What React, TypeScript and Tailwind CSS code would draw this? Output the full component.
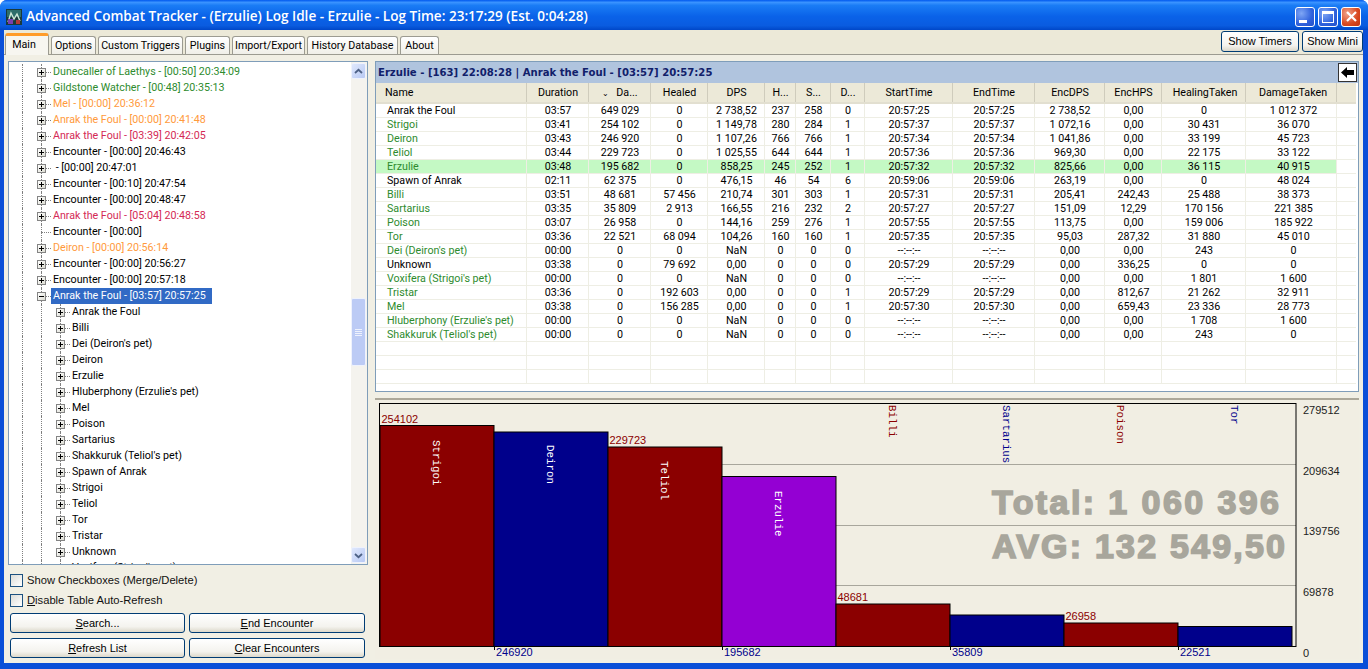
import React from "react";

const F = "font-['Liberation_Sans','DejaVu_Sans',sans-serif]";
const T = "font-['Roboto','Liberation_Sans',sans-serif] text-[10.7px]";
const G = "text-[#2e8b2e]";
const O = "text-[#ff9a3c]";
const R = "text-[#d42a55]";
const K = "text-black";

const encounters: [string, string, boolean?][] = [
  ["Dunecaller of Laethys - [00:50] 20:34:09", G],
  ["Gildstone Watcher - [00:48] 20:35:13", G],
  ["Mel - [00:00] 20:36:12", O],
  ["Anrak the Foul - [00:00] 20:41:48", O],
  ["Anrak the Foul - [03:39] 20:42:05", R],
  ["Encounter - [00:00] 20:46:43", K],
  [" - [00:00] 20:47:01", K],
  ["Encounter - [00:10] 20:47:54", K],
  ["Encounter - [00:00] 20:48:47", K],
  ["Anrak the Foul - [05:04] 20:48:58", R],
  ["Encounter - [00:00]", K, true],
  ["Deiron - [00:00] 20:56:14", O],
  ["Encounter - [00:00] 20:56:27", K],
  ["Encounter - [00:00] 20:57:18", K],
];

const children = [
  "Anrak the Foul", "Billi", "Dei (Deiron's pet)", "Deiron", "Erzulie", "Hluberphony (Erzulie's pet)", "Mel", "Poison",
  "Sartarius", "Shakkuruk (Teliol's pet)", "Spawn of Anrak", "Strigoi", "Teliol", "Tor", "Tristar", "Unknown", "Voxifera (Strigoi's pet)",
];

const cols = [
  ["Name", 150], ["Duration", 62], ["Da...", 62], ["Healed", 57], ["DPS", 57], ["H...", 31], ["S...", 35], ["D...", 34],
  ["StartTime", 88], ["EndTime", 82], ["EncDPS", 70], ["EncHPS", 57], ["HealingTaken", 84], ["DamageTaken", 91],
] as [string, number][];

const K1 = "";
const rows: [string, string, ...string[]][] = [
  ["Anrak the Foul", K1, "03:57", "649 029", "0", "2 738,52", "237", "258", "0", "20:57:25", "20:57:25", "2 738,52", "0,00", "0", "1 012 372"],
  ["Strigoi", G, "03:41", "254 102", "0", "1 149,78", "280", "284", "1", "20:57:37", "20:57:37", "1 072,16", "0,00", "30 431", "36 070"],
  ["Deiron", G, "03:43", "246 920", "0", "1 107,26", "766", "766", "1", "20:57:34", "20:57:34", "1 041,86", "0,00", "33 199", "45 723"],
  ["Teliol", G, "03:44", "229 723", "0", "1 025,55", "644", "644", "1", "20:57:36", "20:57:36", "969,30", "0,00", "22 175", "33 122"],
  ["Erzulie", G, "03:48", "195 682", "0", "858,25", "245", "252", "1", "20:57:32", "20:57:32", "825,66", "0,00", "36 115", "40 915"],
  ["Spawn of Anrak", K1, "02:11", "62 375", "0", "476,15", "46", "54", "6", "20:59:06", "20:59:06", "263,19", "0,00", "0", "48 024"],
  ["Billi", G, "03:51", "48 681", "57 456", "210,74", "301", "303", "1", "20:57:31", "20:57:31", "205,41", "242,43", "25 488", "38 373"],
  ["Sartarius", G, "03:35", "35 809", "2 913", "166,55", "216", "232", "2", "20:57:27", "20:57:27", "151,09", "12,29", "170 156", "221 385"],
  ["Poison", G, "03:07", "26 958", "0", "144,16", "259", "276", "1", "20:57:55", "20:57:55", "113,75", "0,00", "159 006", "185 922"],
  ["Tor", G, "03:36", "22 521", "68 094", "104,26", "160", "160", "1", "20:57:35", "20:57:35", "95,03", "287,32", "31 880", "45 010"],
  ["Dei (Deiron's pet)", G, "00:00", "0", "0", "NaN", "0", "0", "0", "--:--:--", "--:--:--", "0,00", "0,00", "243", "0"],
  ["Unknown", K1, "03:38", "0", "79 692", "0,00", "0", "0", "0", "20:57:29", "20:57:29", "0,00", "336,25", "0", "0"],
  ["Voxifera (Strigoi's pet)", G, "00:00", "0", "0", "NaN", "0", "0", "0", "--:--:--", "--:--:--", "0,00", "0,00", "1 801", "1 600"],
  ["Tristar", G, "03:36", "0", "192 603", "0,00", "0", "0", "1", "20:57:29", "20:57:29", "0,00", "812,67", "21 262", "32 911"],
  ["Mel", G, "03:38", "0", "156 285", "0,00", "0", "0", "1", "20:57:30", "20:57:30", "0,00", "659,43", "23 336", "28 773"],
  ["Hluberphony (Erzulie's pet)", G, "00:00", "0", "0", "NaN", "0", "0", "0", "--:--:--", "--:--:--", "0,00", "0,00", "1 708", "1 600"],
  ["Shakkuruk (Teliol's pet)", G, "00:00", "0", "0", "NaN", "0", "0", "0", "--:--:--", "--:--:--", "0,00", "0,00", "243", "0"],
];

function Expander({ open, none }: { open?: boolean; none?: boolean }) {
  return (
    <span className="relative block h-full w-[19px] shrink-0">
      <span className="absolute left-[9px] top-0 h-full border-l border-dotted border-[#808080]" />
      <span className="absolute left-[9px] right-0 top-[8px] border-t border-dotted border-[#808080]" />
      {!none && (
        <span className="absolute left-[5px] top-[4px] flex h-[9px] w-[9px] items-center justify-center border border-[#848484] bg-[linear-gradient(135deg,#fff,#dcdcd2)]">
          <span className="absolute h-px w-[5px] bg-black" />
          {!open && <span className="absolute h-[5px] w-px bg-black" />}
        </span>
      )}
    </span>
  );
}

function Guide({ w }: { w: string }) {
  return <span className={`block h-full shrink-0 border-r border-dotted border-[#808080] ${w}`} />;
}

function TreeRow({ text, color, none, open, selected }: { text: string; color: string; none?: boolean; open?: boolean; selected?: boolean }) {
  return (
    <div className="flex h-4 shrink-0 items-stretch">
      <Guide w="w-[14px]" />
      <span className="w-[9px] shrink-0" />
      <Expander open={open} none={none} />
      <span className={`flex items-center whitespace-pre pl-[2px] leading-4 ${selected ? "bg-[#316ac5] pr-[6px] text-white" : color}`}>{text}</span>
    </div>
  );
}

function ChildRow({ text }: { text: string }) {
  return (
    <div className="flex h-4 shrink-0 items-stretch">
      <Guide w="w-[14px]" />
      <Guide w="w-[19px]" />
      <span className="w-[9px] shrink-0" />
      <Expander />
      <span className="flex items-center whitespace-pre pl-[2px] leading-4 text-black">{text}</span>
    </div>
  );
}

function ScrollBtn({ up }: { up?: boolean }) {
  return (
    <div className="flex h-[16px] w-[15px] items-center justify-center rounded-[2px] border border-[#eef2fd] bg-[linear-gradient(135deg,#dfe8fd,#b8c9f3)]">
      <svg width="9" height="7" viewBox="0 0 9 7">
        <path d={up ? "M1 5 L4.5 1.8 L8 5" : "M1 2 L4.5 5.2 L8 2"} fill="none" stroke="#4d6185" strokeWidth="1.8" />
      </svg>
    </div>
  );
}

function XpButton({ children, className = "" }: { children: React.ReactNode; className?: string }) {
  return (
    <div className={`flex items-center justify-center rounded-[3px] border border-[#003c74] bg-[linear-gradient(#fff,#f4f3ee_70%,#dcd8ca)] text-black ${className}`}>
      {children}
    </div>
  );
}

function Check({ label }: { label: React.ReactNode }) {
  return (
    <div className="flex h-5 items-center gap-1">
      <span className="h-[13px] w-[13px] border border-[#1c5180] bg-[linear-gradient(135deg,#dcdcd7,#fff)]" />
      <span className="text-[11.2px] text-[#111]">{label}</span>
    </div>
  );
}

function Tab({ label, w }: { label: string; w: string }) {
  return (
    <div className={`flex h-[18px] items-center justify-center rounded-t-[3px] border border-b-0 border-[#9c9b91] bg-[linear-gradient(#fff,#f0efe8)] pt-[1px] text-black ${T} ${w}`}>
      {label}
    </div>
  );
}

function WinBtn({ kind }: { kind: "min" | "max" | "close" }) {
  const bg =
    kind === "close"
      ? "bg-[radial-gradient(circle_at_30%_30%,#f0a48c,#d9481f_60%,#c2330f)]"
      : "bg-[radial-gradient(circle_at_30%_30%,#7fa6f5,#2f61dc_60%,#2350c8)]";
  return (
    <div className={`flex h-[20px] w-[20px] items-center justify-center rounded-[3px] border border-white ${bg}`}>
      {kind === "min" && <span className="mt-[10px] mr-[5px] h-[3px] w-[8px] bg-white" />}
      {kind === "max" && <span className="h-[12px] w-[12px] border border-t-[3px] border-white" />}
      {kind === "close" && (
        <svg width="13" height="13" viewBox="0 0 13 13">
          <path d="M2 2 L11 11 M11 2 L2 11" stroke="#fff" strokeWidth="2.2" />
        </svg>
      )}
    </div>
  );
}

function AppIcon() {
  return (
    <svg width="16" height="16" viewBox="0 0 16 16" className="shrink-0">
      <rect width="16" height="16" fill="#1a3a3a" />
      <rect x="1" y="1" width="14" height="7" fill="#2e6e6a" />
      <path d="M2 13 L5 4 L8 10 L11 5 L14 12" stroke="#cfe8d8" strokeWidth="1.4" fill="none" />
      <rect x="2" y="10" width="5" height="5" fill="#7a3fb0" />
      <rect x="10" y="11" width="4" height="4" fill="#b23a3a" />
    </svg>
  );
}

function Chart() {
  const bars = [
    { x: 381, top: 425.5, c: "#8b0000", n: "Strigoi", nx: 437, ny: 440, v: "254102" },
    { x: 495, top: 432, c: "#00008b", n: "Deiron", nx: 551, ny: 445, v: "246920" },
    { x: 609, top: 447, c: "#8b0000", n: "Teliol", nx: 665, ny: 461, v: "229723" },
    { x: 723, top: 476.5, c: "#9400d3", n: "Erzulie", nx: 779, ny: 491, v: "195682" },
    { x: 837, top: 604, c: "#8b0000", n: "Billi", nx: 893, ny: 405, v: "48681" },
    { x: 951, top: 615, c: "#00008b", n: "Sartarius", nx: 1007, ny: 405, v: "35809" },
    { x: 1065, top: 623, c: "#8b0000", n: "Poison", nx: 1121, ny: 405, v: "26958" },
    { x: 1179, top: 626.5, c: "#00008b", n: "Tor", nx: 1235, ny: 405, v: "22521" },
  ];
  const OX = 376;
  const OY = 400;
  return (
    <svg width="983" height="259" viewBox={`${OX} ${OY} 983 259`} className="block">
      {[464, 525, 585].map((y) => (
        <line key={y} x1="381" x2="1297" y1={y + 0.5} y2={y + 0.5} stroke="#a8a69c" />
      ))}
      <text x="993" y="514" fontFamily="'Liberation Sans',sans-serif" fontWeight="700" fontSize="34" fill="#a8a69c" stroke="#a8a69c" strokeWidth="1.6" textLength="287">Total: 1 060 396</text>
      <text x="993" y="558" fontFamily="'Liberation Sans',sans-serif" fontWeight="700" fontSize="34" fill="#a8a69c" stroke="#a8a69c" strokeWidth="1.6" textLength="293">AVG: 132 549,50</text>
      {bars.map((b, i) => (
        <g key={b.n}>
          <rect x={b.x} y={b.top} width="114" height={646.5 - b.top} fill={b.c} stroke="#000" strokeWidth="1" />
          <text
            transform={`translate(${b.nx - 3.5} ${b.ny}) rotate(90)`}
            fontFamily="'Liberation Mono',monospace"
            fontSize="10.8"
            fill={i < 4 ? "#fff" : b.c}
          >
            {b.n}
          </text>
          {i % 2 === 0 ? (
            <text x={b.x + 1.5} y={b.top - 3} fontFamily="'Liberation Sans',sans-serif" fontSize="11" fill="#8b0000">{b.v}</text>
          ) : (
            <>
              <line x1={b.x + 0.5} x2={b.x + 0.5} y1="646" y2="650" stroke="#000" />
              <text x={b.x + 2} y="656" fontFamily="'Liberation Sans',sans-serif" fontSize="11" fill="#00008b">{b.v}</text>
            </>
          )}
        </g>
      ))}
      <rect x="380.5" y="403.5" width="916.5" height="243" fill="none" stroke="#000" />
      {[["279512", 414], ["209634", 475], ["139756", 535], ["69878", 596], ["0", 657]].map(([t, y]) => (
        <text key={t} x="1304" y={y} fontFamily="'Liberation Sans',sans-serif" fontSize="11" fill="#222">{t}</text>
      ))}
    </svg>
  );
}

export default function App() {
  return (
    <div className={`flex h-[669px] w-[1368px] flex-col overflow-hidden rounded-t-[7px] bg-[#0a4fd8] text-[11px] ${F}`}>
      <div className="flex h-[30px] shrink-0 items-center bg-[linear-gradient(#0058ee,#3a93ff_8%,#1a7cf5_18%,#0a62e8_55%,#0a5ce0_85%,#0047c8)] pl-[6px] pr-[7px] pt-[3px]">
        <AppIcon />
        <span className="ml-[4px] flex-1 font-['Open_Sans',sans-serif] text-[13.55px] font-semibold whitespace-pre text-white">
          Advanced Combat Tracker - (Erzulie) Log Idle - Erzulie - Log Time: 23:17:29 (Est. 0:04:28)
        </span>
        <div className="flex gap-[3px]">
          <WinBtn kind="min" />
          <WinBtn kind="max" />
          <WinBtn kind="close" />
        </div>
      </div>
      <div className="mb-[6px] ml-[4px] mr-[5px] flex min-h-0 flex-1 flex-col bg-[#ece9d8]">
        <div className="flex h-[24px] shrink-0 items-end pl-[1px]">
          <div className={`relative z-10 mb-[-1px] flex h-[22px] w-[44px] items-center justify-center rounded-t-[3px] border-x border-[#9c9b91] border-t-[3px] border-t-[#ff9c2a] bg-[#f7f6f0] pr-[6px] text-black ${T}`}>
            Main
          </div>
          <div className="ml-[2px] flex gap-[2px]">
            <Tab label="Options" w="w-[45px]" />
            <Tab label="Custom Triggers" w="w-[85px]" />
            <Tab label="Plugins" w="w-[45px]" />
            <Tab label="Import/Export" w="w-[73px]" />
            <Tab label="History Database" w="w-[91px]" />
            <Tab label="About" w="w-[39px]" />
          </div>
          <div className="ml-auto mb-[2px] flex gap-[3px]">
            <XpButton className="h-[21px] w-[78px]">Show Timers</XpButton>
            <XpButton className="h-[21px] w-[61px]">Show Mini</XpButton>
          </div>
        </div>
        <div className="flex min-h-0 flex-1 gap-[7px] border-t border-[#9c9b91] bg-[#f1efe4] pl-[4px] pr-[4px] pt-[6px] pb-[4px]">
          <div className="flex w-[360px] shrink-0 flex-col">
            <div className={`flex h-[504px] shrink-0 border border-[#7f9db9] bg-white ${T}`}>
              <div className="flex min-w-0 flex-1 flex-col overflow-hidden pt-[2px]">
                {encounters.map(([t, c, none]) => (
                  <TreeRow key={t} text={t} color={c} none={none} />
                ))}
                <TreeRow text="Anrak the Foul - [03:57] 20:57:25" color={K} open selected />
                {children.map((t) => (
                  <ChildRow key={t} text={t} />
                ))}
              </div>
              <div className="flex w-[16px] shrink-0 flex-col bg-[#f4f3ee] pt-[1px] pb-[1px]">
                <ScrollBtn up />
                <div className="mt-[219px] flex h-[68px] w-[15px] items-center justify-center rounded-[2px] border border-[#eef2fd] bg-[#bccbf5]">
                  <div className="flex flex-col gap-px">
                    {[0, 1, 2, 3].map((i) => (
                      <span key={i} className="block h-px w-[7px] bg-[#eef2fd]" />
                    ))}
                  </div>
                </div>
                <div className="flex-1" />
                <ScrollBtn />
              </div>
            </div>
            <div className="mt-[5px] flex flex-col pl-[2px]">
              <Check label="Show Checkboxes (Merge/Delete)" />
              <Check label={<><u>D</u>isable Table Auto-Refresh</>} />
            </div>
            <div className="mt-[3px] grid grid-cols-[175px_176px] gap-x-[4px] gap-y-[5px] pl-[2px]">
              <XpButton className="h-[20px]"><span><u>S</u>earch...</span></XpButton>
              <XpButton className="h-[20px]"><span><u>E</u>nd Encounter</span></XpButton>
              <XpButton className="h-[20px]"><span><u>R</u>efresh List</span></XpButton>
              <XpButton className="h-[20px]"><span><u>C</u>lear Encounters</span></XpButton>
            </div>
          </div>
          <div className="flex min-w-0 flex-1 flex-col">
            <div className="flex h-[331px] shrink-0 flex-col border border-[#7f9db9] bg-white">
              <div className="flex h-[21px] shrink-0 items-center justify-between bg-[#b0c4de] pl-[2px] pr-[1px]">
                <span className="font-['DejaVu_Sans',sans-serif] text-[10.1px] font-bold text-[#10206a]">
                  Erzulie - [163] 22:08:28 | Anrak the Foul - [03:57] 20:57:25
                </span>
                <div className="flex h-[19px] w-[19px] items-center justify-center border border-[#333] bg-white">
                  <svg width="13" height="11" viewBox="0 0 13 11">
                    <path d="M0 5.5 L6 0 V3 H13 V8 H6 V11 Z" fill="#000" />
                  </svg>
                </div>
              </div>
              <div className={`min-h-0 flex-1 overflow-hidden ${T}`}>
                <table className="table-fixed border-collapse">
                  <colgroup>
                    {cols.map(([n, w]) => (
                      <col key={n} className="" style={{ width: w }} />
                    ))}
                    <col style={{ width: 20 }} />
                  </colgroup>
                  <thead>
                    <tr className="h-[20px] border-b-[2px] border-[#e2dfd0] bg-[#ece9d8]">
                      {cols.map(([n], i) => (
                        <th
                          key={n}
                          className={`border-r border-[#cfccbc] pt-[1px] font-normal text-black ${
                            i === 0 ? "pl-[9px] text-left" : i === cols.length - 1 ? "pl-[5px] text-center" : i === cols.length - 2 ? "pl-[4px] text-center" : "pl-[2px] text-center"
                          }`}
                        >
                          {i === 2 ? <span><span className="mr-[7px] text-[8px]">⌄</span>{n}</span> : n}
                        </th>
                      ))}
                      <th />
                    </tr>
                  </thead>
                  <tbody>
                    {Array.from({ length: 20 }).map((_, ri) => {
                      const r = rows[ri];
                      const hi = r && r[0] === "Erzulie";
                      return (
                        <tr key={ri} className={`h-[14px] border-b border-[#eeeee4] ${hi ? "bg-[#c4f9c4]" : ""}`}>
                          {cols.map(([n], ci) => {
                            const val = !r ? "" : ci === 0 ? r[0] : r[ci + 1];
                            return (
                              <td
                                key={n}
                                className={`h-[14px] overflow-hidden border-r border-[#eeeee4] p-0 leading-[13px] whitespace-nowrap ${
                                  ci === 0
                                    ? `pl-[11px] ${r && r[1] ? r[1] : "text-black"}`
                                    : ci === cols.length - 1
                                      ? "pl-[6px] text-center text-black"
                                      : "pl-[2px] text-center text-black"
                                }`}
                              >
                                {val}
                              </td>
                            );
                          })}
                          <td className="bg-white" />
                        </tr>
                      );
                    })}
                  </tbody>
                </table>
              </div>
            </div>
            <div className="mt-[6px] border-t-[2px] border-[#aca899] bg-[#f1eee3]">
              <Chart />
            </div>
          </div>
        </div>
      </div>
    </div>
  );
}
